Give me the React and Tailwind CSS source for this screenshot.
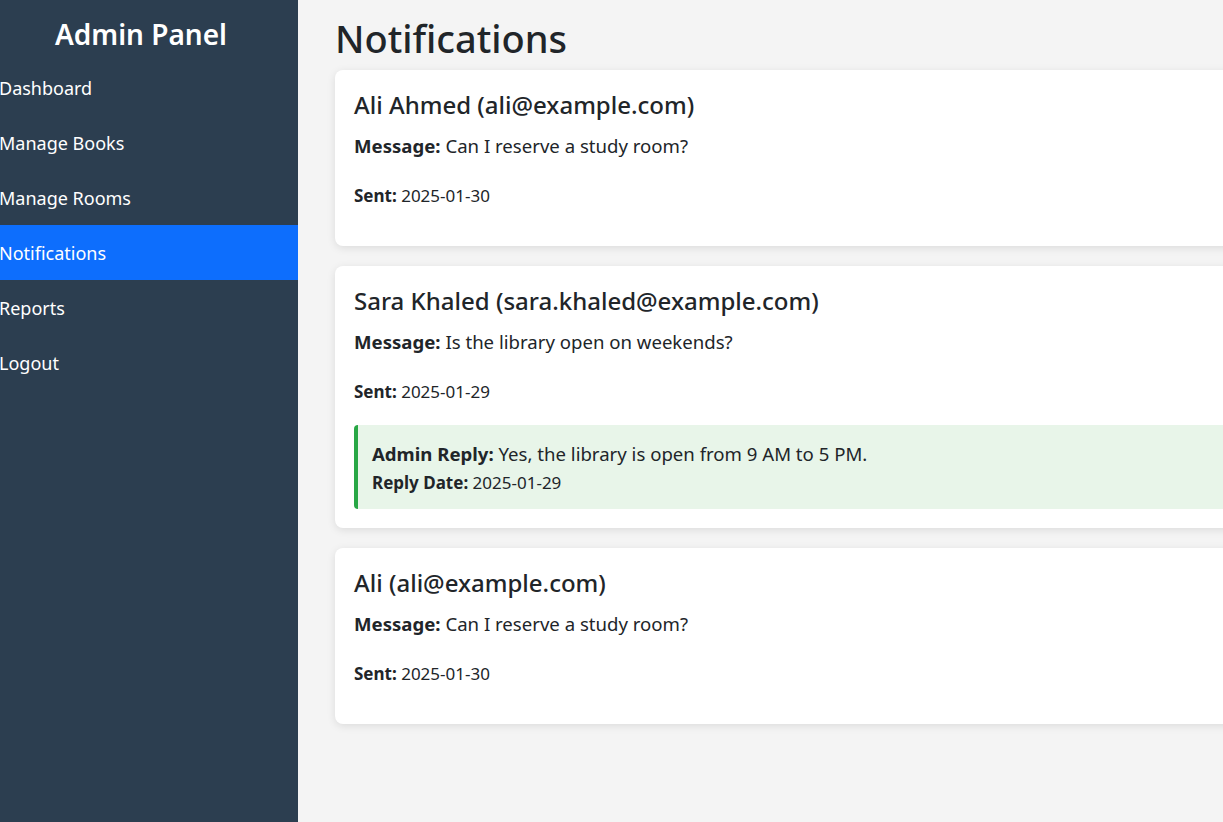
const navItems = ["Dashboard", "Manage Books", "Manage Rooms", "Notifications", "Reports", "Logout"];

const notifications = [
  { name: "Ali Ahmed", email: "ali@example.com", message: "Can I reserve a study room?", sent: "2025-01-30" },
  {
    name: "Sara Khaled",
    email: "sara.khaled@example.com",
    message: "Is the library open on weekends?",
    sent: "2025-01-29",
    reply: "Yes, the library is open from 9 AM to 5 PM.",
    replyDate: "2025-01-29",
  },
  { name: "Ali", email: "ali@example.com", message: "Can I reserve a study room?", sent: "2025-01-30" },
];

function Card({ item }) {
  return (
    <div className="w-[1000px] shrink-0 rounded-lg bg-white px-[19px] pt-[20px] pb-[19px] shadow-[0_2px_8px_rgba(0,0,0,0.1)]">
      <h3 className="text-[24px] leading-[30px] font-medium text-[#212529]">
        {item.name} ({item.email})
      </h3>
      <p className="mt-[12px] text-[18.6px] leading-[27px] text-[#212529]">
        <strong className="font-bold">Message:</strong> {item.message}
      </p>
      <p className="mt-[25px] text-[17px] leading-[24px] text-[#212529]">
        <strong className="font-bold">Sent:</strong> {item.sent}
      </p>
      {item.reply ? (
        <div className="mt-[21px] rounded-[4px] border-l-4 border-[#28a745] bg-[#e8f5e9] px-[14px] pt-[15px] pb-[14px] text-[#212529]">
          <p className="text-[18.6px] leading-[27px]">
            <strong className="font-bold">Admin Reply:</strong> {item.reply}
          </p>
          <p className="mt-[4px] text-[17px] leading-[24px]">
            <strong className="font-bold">Reply Date:</strong> {item.replyDate}
          </p>
        </div>
      ) : (
        <div className="h-[19px]" />
      )}
    </div>
  );
}

export default function App() {
  return (
    <div className="flex h-[822px] w-[1223px] overflow-hidden bg-[#f4f4f4] font-['Noto_Sans',sans-serif]">
      <aside className="w-[298px] shrink-0 bg-[#2c3e50] text-white">
        <h2 className="pt-[14px] pr-[16px] text-center text-[28px] leading-[40px] font-semibold">Admin Panel</h2>
        <ul className="mt-[6px]">
          {navItems.map((label) => (
            <li
              key={label}
              className={
                "-ml-px flex h-[55px] items-center pt-[2px] text-[18px] " +
                (label === "Notifications" ? "bg-[#0d6efd]" : "")
              }
            >
              {label}
            </li>
          ))}
        </ul>
      </aside>

      <main className="flex min-w-0 flex-1 flex-col pl-[37px] pt-[14px]">
        <h1 className="mb-[8px] text-[38px] leading-[48px] font-medium text-[#212529]">Notifications</h1>
        <div className="flex flex-col gap-[20px]">
          {notifications.map((n, i) => (
            <Card key={i} item={n} />
          ))}
        </div>
      </main>
    </div>
  );
}
